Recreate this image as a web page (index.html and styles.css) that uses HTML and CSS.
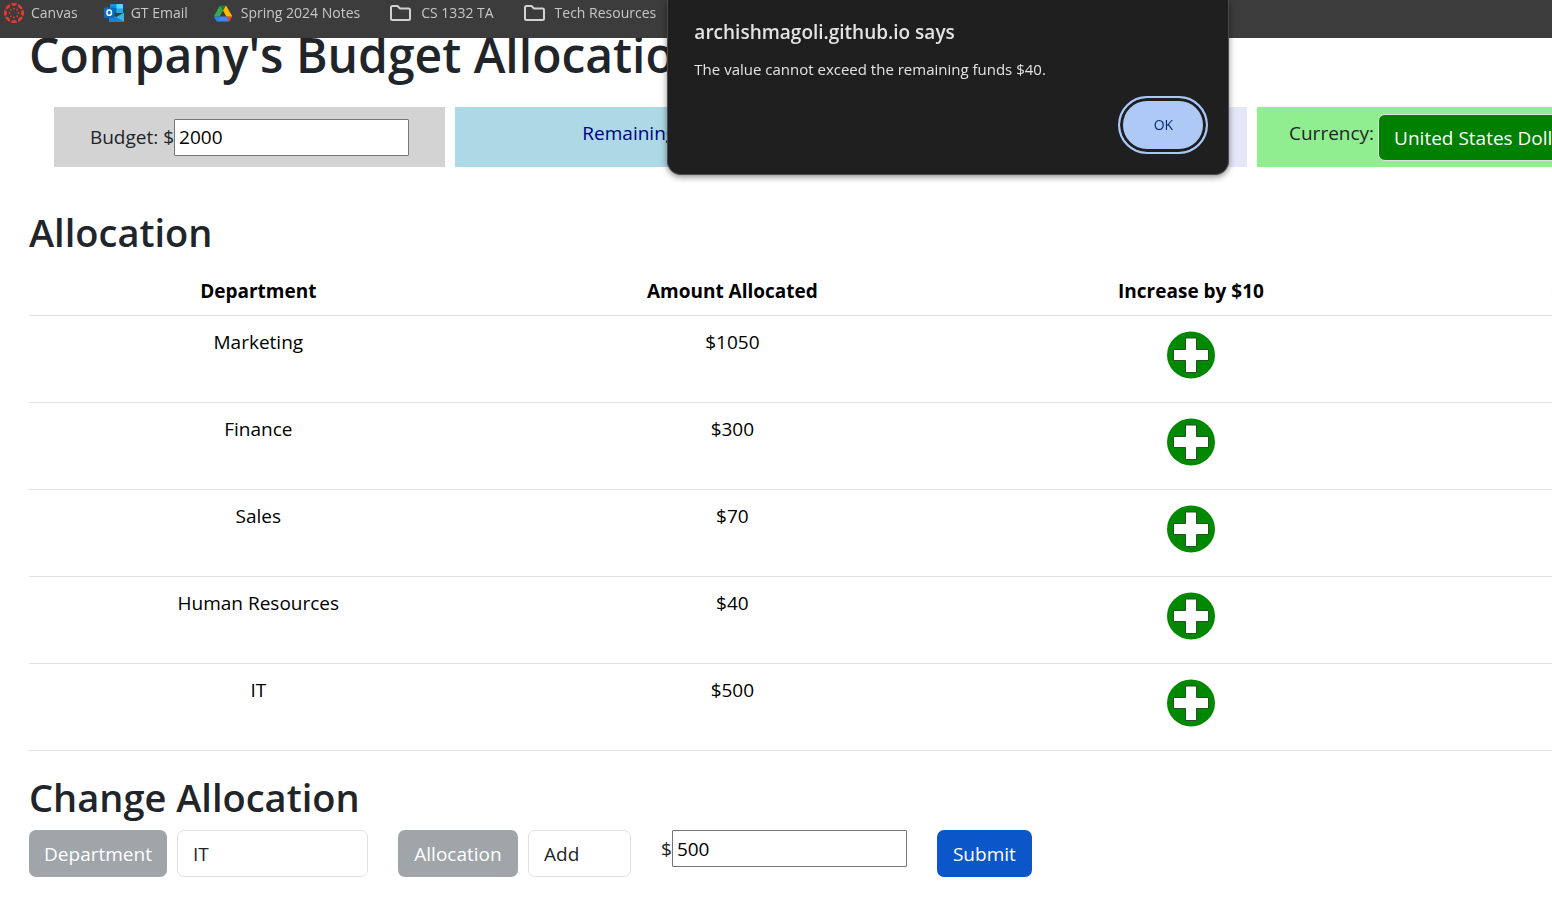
FILE: index.html
```html
<!DOCTYPE html>
<html lang="en">
<head>
<meta charset="utf-8">
<title>Company's Budget Allocation</title>
<link rel="stylesheet" href="styles.css">
</head>
<body>
<nav class="bookmarks" aria-label="Bookmarks">
  <a class="bookmark canvas" href="#">
    <svg width="20" height="20" viewBox="0 0 20 20" fill="#e8392c">
      <g id="seg"><path d="M6.800 .6A9.800 9.800 0 0 1 13.200 .6A3.300 3.300 0 0 1 6.800 .6Z"/><circle cx="10" cy="5.600" r=".9"/></g>
      <use href="#seg" transform="rotate(45 10 10)"/><use href="#seg" transform="rotate(90 10 10)"/><use href="#seg" transform="rotate(135 10 10)"/><use href="#seg" transform="rotate(180 10 10)"/><use href="#seg" transform="rotate(225 10 10)"/><use href="#seg" transform="rotate(270 10 10)"/><use href="#seg" transform="rotate(315 10 10)"/>
    </svg>Canvas</a>
  <a class="bookmark email" href="#">
    <svg width="20" height="18" viewBox="0 0 20 18">
      <path d="M6 1q0-1 1-1h11q1 0 1 1v8H6z" fill="#1490df"/><path d="M12.500 0H18q1 0 1 1v4h-6.500z" fill="#50d9ff"/><path d="M6 4h6.500v5H6z" fill="#0364b8"/><path d="M12.500 4.500H19V9h-6.500z" fill="#28a8ea"/>
      <path d="M5 9l7.500 4L20 8.500V17q0 1-1 1H6q-1 0-1-1z" fill="#1a9be8"/><path d="M5 17.500 20 9v8q0 1-1 1H6z" fill="#35b8f1"/><path d="M5 9l15 8.500q-.5.500-1 .500H6q-1 0-1-1z" fill="#1784d8"/>
      <rect y="3.500" width="10.500" height="10.500" rx="1" fill="#0f6cbd"/><ellipse cx="5.200" cy="8.700" rx="2.300" ry="2.600" fill="none" stroke="#fff" stroke-width="1.500"/>
    </svg>GT Email</a>
  <a class="bookmark drive" href="#">
    <svg width="18" height="17" viewBox="0 0 87 78"><path d="m6.600 66.850 3.850 6.650c.8 1.400 1.950 2.500 3.300 3.300l13.750-23.800h-27.500c0 1.550.4 3.100 1.200 4.500z" fill="#2684fc"/><path d="m43.650 25-13.750-23.800c-1.350.8-2.500 1.900-3.300 3.300l-25.400 44a9 9 0 0 0-1.200 4.500h27.500z" fill="#34a853"/><path d="m73.550 76.800c1.350-.8 2.500-1.900 3.300-3.300l9.200-16c.8-1.400 1.200-2.950 1.200-4.500h-27.500l5.850 11.500z" fill="#ea4335"/><path d="m43.650 25 13.750-23.800c-1.350-.8-2.900-1.200-4.500-1.200h-18.500c-1.600 0-3.150.45-4.500 1.200z" fill="#188038"/><path d="m59.800 53h-32.300l-13.750 23.800c1.350.8 2.900 1.200 4.500 1.200h50.800c1.600 0 3.150-.45 4.500-1.200z" fill="#4285f4"/><path d="m73.400 26.500-12.700-22c-.8-1.400-1.950-2.500-3.300-3.300l-13.750 23.800 16.150 28h27.450c0-1.550-.4-3.100-1.200-4.500z" fill="#ffba00"/></svg>Spring 2024 Notes</a>
  <a class="bookmark folder" href="#">
    <svg width="21" height="16" viewBox="0 0 21 16" fill="none" stroke="#d2d2d2" stroke-width="2"><path d="M1 2.500Q1 1 2.500 1H7.500L10 3.500H18.500Q20 3.500 20 5V13.500Q20 15 18.500 15H2.500Q1 15 1 13.500Z"/></svg>CS 1332 TA</a>
  <a class="bookmark folder" href="#">
    <svg width="21" height="16" viewBox="0 0 21 16" fill="none" stroke="#d2d2d2" stroke-width="2"><path d="M1 2.500Q1 1 2.500 1H7.500L10 3.500H18.500Q20 3.500 20 5V13.500Q20 15 18.500 15H2.500Q1 15 1 13.500Z"/></svg>Tech Resources</a>
</nav>

<dialog class="alert" open aria-labelledby="alert-title">
  <h2 class="alert-title" id="alert-title">archishmagoli.github.io says</h2>
  <p class="alert-text">The value cannot exceed the remaining funds $40.</p>
  <form class="alert-actions" method="dialog"><button class="alert-ok">OK</button></form>
</dialog>

<main class="page">
  <h1 class="title">Company's Budget Allocation</h1>
  <section class="cards">
    <div class="card budget"><label for="budget">Budget: $</label><input class="number" id="budget" type="text" value="2000"></div>
    <div class="card remaining">Remaining: $40</div>
    <div class="card spent"></div>
    <div class="card currency"><label for="currency">Currency:</label><select class="currency-select" id="currency"><option>United States Dollar ($)</option></select></div>
  </section>

  <h2 class="heading">Allocation</h2>
  <table class="table">
    <thead><tr><th class="col-dept">Department</th><th class="col-amount">Amount Allocated</th><th class="col-inc">Increase by $10</th><th>Decrease by $10</th></tr></thead>
    <tbody>
      <tr><td>Marketing</td><td>$1050</td><td><button class="plus" aria-label="Increase Marketing"><svg width="48" height="48" viewBox="0 0 48 48"><ellipse cx="24" cy="24" rx="24" ry="23.500" fill="#080"/><path id="cross" d="M18.500 7H29.500V18.500H41.500V29.500H29.500V41.500H18.500V29.500H6.500V18.500H18.500Z" fill="#fff" stroke="#294d29"/></svg></button></td><td></td></tr>
      <tr><td>Finance</td><td>$300</td><td><button class="plus" aria-label="Increase Finance"><svg width="48" height="48" viewBox="0 0 48 48"><ellipse cx="24" cy="24" rx="24" ry="23.500" fill="#080"/><use href="#cross"/></svg></button></td><td></td></tr>
      <tr><td>Sales</td><td>$70</td><td><button class="plus" aria-label="Increase Sales"><svg width="48" height="48" viewBox="0 0 48 48"><ellipse cx="24" cy="24" rx="24" ry="23.500" fill="#080"/><use href="#cross"/></svg></button></td><td></td></tr>
      <tr><td>Human Resources</td><td>$40</td><td><button class="plus" aria-label="Increase Human Resources"><svg width="48" height="48" viewBox="0 0 48 48"><ellipse cx="24" cy="24" rx="24" ry="23.500" fill="#080"/><use href="#cross"/></svg></button></td><td></td></tr>
      <tr><td>IT</td><td>$500</td><td><button class="plus" aria-label="Increase IT"><svg width="48" height="48" viewBox="0 0 48 48"><ellipse cx="24" cy="24" rx="24" ry="23.500" fill="#080"/><use href="#cross"/></svg></button></td><td></td></tr>
    </tbody>
  </table>

  <h2 class="heading">Change Allocation</h2>
  <form class="change">
    <div class="group"><label class="tag tag-dept" for="dept">Department</label><select class="pick pick-dept" id="dept"><option>IT</option></select></div>
    <div class="group"><label class="tag tag-alloc" for="action">Allocation</label><select class="pick pick-action" id="action"><option>Add</option></select></div>
    <div class="amount"><label for="amount">$</label><input class="number" id="amount" type="text" value="500"></div>
    <button class="submit" type="button">Submit</button>
  </form>
</main>
</body>
</html>
```
FILE: styles.css
```css
* { box-sizing: border-box; }
body {
  margin: 0;
  overflow: hidden;
  background: #fff;
  color: #212529;
  font: 19px/30px "Segoe UI", "Open Sans", "Noto Sans", sans-serif;
}
h1, h2, p { margin: 0; }
button, input, select { font: inherit; }

.bookmarks {
  position: fixed;
  inset: 0 0 auto;
  z-index: 1;
  height: 38px;
  padding-left: 4px;
  display: flex;
  gap: 26px;
  background: #3c3c3c;
}
.bookmark {
  display: flex;
  align-items: center;
  gap: 7px;
  height: 26px;
  color: #c7c7c7;
  font-size: 14px;
  text-decoration: none;
  white-space: nowrap;
}
.drive { gap: 9px; }
.folder { gap: 10px; padding-left: 4px; }

.alert {
  position: fixed;
  inset: 0 auto auto 43%;
  z-index: 2;
  width: 562px;
  margin: 0;
  padding: 17px 20px 20px 26px;
  border: 1px solid #4a4a4a;
  border-top: 0;
  border-radius: 0 0 14px 14px;
  background: #1f1f1f;
  color: #e3e3e3;
  box-shadow: 0 2px 6px rgba(0, 0, 0, .45);
}
.alert-title { font-size: 19px; font-weight: 600; line-height: 30px; }
.alert-text { margin-top: 7px; font-size: 15px; line-height: 30px; }
.alert-actions { display: flex; justify-content: flex-end; margin-top: 12px; }
.alert-ok {
  width: 90px;
  height: 58px;
  padding: 0;
  border: 2px solid #a8c7fa;
  border-radius: 29px;
  background: #afc9f7;
  box-shadow: inset 0 0 0 3px #1f1f1f;
  color: #062e6f;
  font-size: 14px;
}

.page { width: 121vw; padding: 25px 29px; }
.title { font-size: 48px; font-weight: 600; line-height: 60px; }
.cards { display: flex; gap: 10px; padding: 22px 25px 0; }
.card { flex: 0 1 391px; height: 60px; padding: 11px 0; text-align: center; }
.budget {
  display: flex;
  align-items: center;
  justify-content: center;
  background: lightgray;
}
.remaining { background: lightblue; color: navy; }
.spent { background: lavender; }
.currency {
  display: flex;
  gap: 4px;
  padding: 7px 0 7px 32px;
  background: lightgreen;
}
.currency label { padding-top: 4px; }
.currency-select {
  width: 300px;
  flex: none;
  height: 47px;
  padding: 0 15px;
  appearance: none;
  border: 1px solid #dee2e6;
  border-radius: 7px;
  background: green;
  color: #fff;
}
.number {
  width: 235px;
  height: 37px;
  padding: 0 4px;
  border: 1px solid #767676;
  border-radius: 1px;
  background: #fff;
  color: #000;
}

.heading { font-size: 38px; font-weight: 600; line-height: 48px; }
.cards + .heading { margin-top: 41px; }
.table {
  width: 100%;
  margin: 9px 0 22px;
  border-collapse: collapse;
  table-layout: fixed;
  color: #000;
  text-align: center;
}
.table th, .table td {
  padding: 11px 10px 9px;
  border-bottom: 1px solid #dee2e6;
  vertical-align: top;
}
.table th { font-weight: 700; }
.table td { height: 87px; }
.col-dept { width: 25.2%; }
.col-amount { width: 26.9%; }
.col-inc { width: 23.5%; }
.plus { display: block; margin: 4px auto 0; padding: 0; border: 0; background: none; }
.plus svg { display: block; }

.change { display: flex; align-items: flex-start; gap: 30px; margin-top: 9px; }
.group { display: flex; gap: 10px; }
.tag, .pick, .submit {
  height: 47px;
  padding: 0 15px;
  border: 1px solid transparent;
  border-radius: 7px;
}
.tag { padding: 0; background: #a0a5aa; color: #fff; line-height: 47px; text-align: center; }
.tag-dept { width: 138px; }
.tag-alloc { width: 120px; }
.pick { appearance: none; border-color: #dee2e6; background: #fff; color: #212529; }
.pick-dept { width: 191px; }
.pick-action { width: 103px; }
.amount { display: flex; align-items: center; }
.submit { width: 95px; background: #0b57ca; color: #fff; }
```
